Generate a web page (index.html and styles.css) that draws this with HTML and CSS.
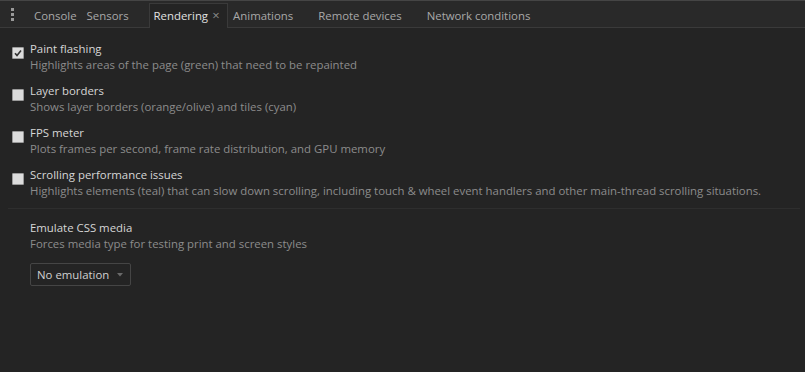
FILE: index.html
```html
<!DOCTYPE html>
<html lang="en">
<head>
    <meta charset="UTF-8">
    <title>Rendering</title>
    <link rel="stylesheet" href="styles.css">
</head>
<body>
    <div class="tabbar">
        <div class="menu-dots"><span></span><span></span><span></span></div>
        <div class="tab">Console</div>
        <div class="tab closeable">Sensors<span class="close">×</span></div>
        <div class="tab closeable selected">Rendering<span class="close">×</span></div>
        <div class="tab closeable">Animations<span class="close">×</span></div>
        <div class="tab closeable">Remote devices<span class="close">×</span></div>
        <div class="tab closeable">Network conditions<span class="close">×</span></div>
    </div>

    <div class="panel">
        <div class="option">
            <span class="checkbox checked">
                <svg width="8" height="8" viewBox="0 0 8 8"><path d="M1 4.2 L3 6.4 L7 1.4" fill="none" stroke="#333" stroke-width="1.6"/></svg>
            </span>
            <div class="option-text">
                <div class="title">Paint flashing</div>
                <div class="desc">Highlights areas of the page (green) that need to be repainted</div>
            </div>
        </div>
        <div class="option">
            <span class="checkbox"></span>
            <div class="option-text">
                <div class="title">Layer borders</div>
                <div class="desc">Shows layer borders (orange/olive) and tiles (cyan)</div>
            </div>
        </div>
        <div class="option">
            <span class="checkbox"></span>
            <div class="option-text">
                <div class="title">FPS meter</div>
                <div class="desc">Plots frames per second, frame rate distribution, and GPU memory</div>
            </div>
        </div>
        <div class="option">
            <span class="checkbox"></span>
            <div class="option-text">
                <div class="title">Scrolling performance issues</div>
                <div class="desc">Highlights elements (teal) that can slow down scrolling, including touch &amp; wheel event handlers and other main-thread scrolling situations.</div>
            </div>
        </div>

        <div class="separator"></div>

        <div class="media">
            <div class="title">Emulate CSS media</div>
            <div class="desc">Forces media type for testing print and screen styles</div>
            <div class="select">
                No emulation
                <svg class="caret" width="6" height="4" viewBox="0 0 6 4"><path d="M0 0 L6 0 L3 3.5 Z" fill="#6a6a6a"/></svg>
            </div>
        </div>
    </div>
</body>
</html>
```

FILE: styles.css
```css
* {
    margin: 0;
    padding: 0;
    box-sizing: border-box;
}

body {
    font-family: 'Open Sans', 'Noto Sans', sans-serif;
    font-size: 11.4px;
    background: #242424;
    color: #d0d0d0;
    width: 805px;
    height: 372px;
    overflow: hidden;
}

.tabbar {
    display: flex;
    align-items: flex-end;
    height: 28px;
    background: #292929;
    border-top: 1px solid #454545;
    border-bottom: 1px solid #3a3a3a;
}

.menu-dots {
    width: 29px;
    height: 27px;
    display: flex;
    flex-direction: column;
    align-items: center;
    justify-content: center;
    gap: 2px;
    padding-right: 5px;
    align-self: flex-start;
}

.menu-dots span {
    width: 3px;
    height: 3px;
    background: #999;
}

.tab {
    height: 25px;
    padding: 0 4px 2px;
    display: flex;
    align-items: center;
    color: #a8a8a8;
    white-space: nowrap;
    border: 1px solid transparent;
    border-bottom: none;
    margin-bottom: -1px;
}

.tab .close {
    width: 14px;
    margin-left: 1px;
    text-align: center;
    color: #8a8a8a;
    font-size: 13px;
    visibility: hidden;
}

.tab.selected {
    background: #242424;
    border-color: #3a3a3a;
    color: #e0e0e0;
}

.tab.selected .close {
    visibility: visible;
}

.panel {
    padding-top: 13px;
}

.option {
    display: flex;
    height: 42px;
    padding-left: 12px;
}

.checkbox {
    width: 12px;
    height: 12px;
    margin-top: 6px;
    margin-right: 6px;
    background: #dcdcdc;
    border: 1px solid #9a9a9a;
    border-radius: 1px;
    display: flex;
    align-items: center;
    justify-content: center;
}

.title {
    color: #d6d6d6;
    line-height: 16px;
}

.desc {
    color: #8c8c8c;
    line-height: 16px;
}

.separator {
    height: 1px;
    background: #2e2e2e;
    margin: -1px 5px 0 8px;
}

.media {
    padding: 11px 0 0 30px;
}

.select {
    display: inline-flex;
    align-items: center;
    margin-top: 11px;
    width: 101px;
    height: 23px;
    padding-left: 6px;
    border: 1px solid #454545;
    border-radius: 2px;
    color: #d0d0d0;
    position: relative;
}

.caret {
    position: absolute;
    right: 7px;
    top: 9px;
}
```
